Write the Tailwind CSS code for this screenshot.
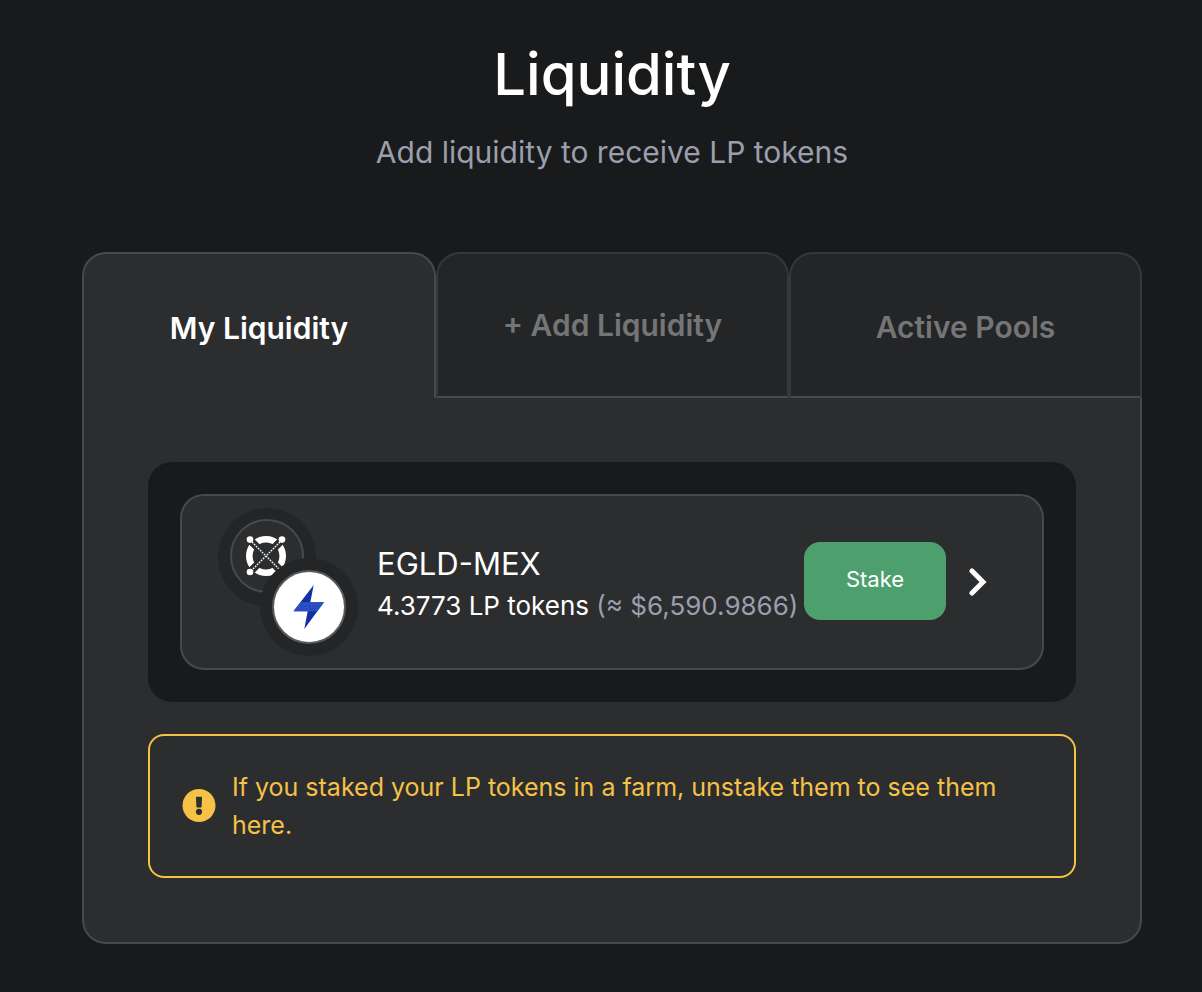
<!DOCTYPE html>
<html lang="en">
<head>
<meta charset="utf-8">
<meta name="viewport" content="width=device-width, initial-scale=1">
<title>Liquidity</title>
<script src="https://cdn.jsdelivr.net/npm/@tailwindcss/browser@4"></script>
</head>
<body class="min-h-screen bg-[#191a1c] font-['Inter',sans-serif] text-white">
<main class="pt-9 pb-12 pl-[82px] pr-[60px]">
  <header class="flex flex-col items-center text-center">
    <h1 class="text-[58px] leading-[76px] font-medium">Liquidity</h1>
    <p class="mt-4 text-[30px] leading-[48px] text-[#9a9fae]">Add liquidity to receive LP tokens</p>
  </header>

  <div role="tablist" class="mt-[76px] grid grid-cols-[354px_1fr_1fr] text-[30px] leading-[48px] font-semibold">
    <button type="button" role="tab" aria-selected="true" class="h-[146px] rounded-t-3xl border-2 border-b-0 border-[#48494b] bg-[#2c2d2f] pt-1">My Liquidity</button>
    <button type="button" role="tab" aria-selected="false" class="h-[146px] rounded-t-3xl border-2 border-[#363739] border-b-[#48494b] bg-[#242527] text-[#747577]">+ Add Liquidity</button>
    <button type="button" role="tab" aria-selected="false" class="h-[146px] rounded-t-3xl border-2 border-[#363739] border-b-[#48494b] bg-[#242527] pt-1 text-[#747577]">Active Pools</button>
  </div>

  <section role="tabpanel" class="flex flex-col gap-8 rounded-b-3xl border-2 border-t-0 border-[#48494b] bg-[#2c2d2f] p-16">
    <div class="rounded-3xl bg-[#191a1c] p-8">
      <article class="flex h-44 items-center rounded-3xl border-2 border-[#48494b] bg-[#2c2d2f] pl-9 pr-[55px]">
        <svg class="h-[150px] w-[140px] shrink-0" viewBox="0 0 140 150" aria-hidden="true">
          <circle cx="49" cy="50" r="49" fill="#242527"/>
          <circle cx="49" cy="49" r="36" fill="#2c2d2f" stroke="#48494b" stroke-width="2"/>
          <circle cx="48" cy="49" r="16.7" fill="none" stroke="#fff" stroke-width="6.6"/>
          <path d="M32 33 64 65M64 33 32 65" stroke="#2c2d2f" stroke-width="7.6"/>
          <path d="M32 33 64 65M64 33 32 65" stroke="#fff" stroke-width="1.3" stroke-dasharray="1.8 1"/>
          <g fill="#fff"><circle cx="32" cy="32.6" r="3.3"/><circle cx="64" cy="32.6" r="3.3"/><circle cx="32" cy="65" r="3.3"/><circle cx="64" cy="65" r="3.3"/></g>
          <circle cx="91" cy="100" r="49" fill="#242527"/>
          <circle cx="91" cy="100" r="36" fill="#fff" stroke="#58595b" stroke-width="2"/>
          <path d="M95.7 78 92.3 95.3H106L86.3 122 89.7 104.3H75.5Z" fill="#122fa6"/>
          <path d="M82.5 95.3H106L99.3 104.3H75.5Z" fill="#2c50c4"/>
          <path d="M83 99h18M80 102h20M90 106h8M90 109h6" stroke="#122fa6" stroke-width="1" stroke-dasharray="1 3"/>
        </svg>
        <div class="ml-[19px] pt-1 whitespace-nowrap">
          <h2 class="text-[31px] leading-[44px]">EGLD-MEX</h2>
          <p class="text-[26px] leading-[40px]">4.3773 LP tokens <span class="text-[#9a9fae]">(≈ $6,590.9866)</span></p>
        </div>
        <button type="button" class="mb-0.5 ml-auto h-[78px] w-[142px] shrink-0 rounded-2xl bg-[#4d9f6e] pb-1 text-[22px]">Stake</button>
        <button type="button" aria-label="Open EGLD-MEX position" class="ml-[23px] shrink-0">
          <svg class="h-7 w-[18px]" viewBox="0 0 18 28" fill="none" stroke="#fff" stroke-width="5" stroke-linecap="round" stroke-linejoin="miter" aria-hidden="true"><path d="M3 3 14 14 3 25"/></svg>
        </button>
      </article>
    </div>

    <div role="status" class="flex items-center gap-4 rounded-2xl border-2 border-[#f5c146] px-8 py-8 text-[25px] leading-[38px] text-[#f5c146]">
      <svg class="h-[34px] w-[34px] shrink-0" viewBox="0 0 34 34" aria-hidden="true"><circle cx="17" cy="16.5" r="16.5" fill="#f5c146"/><path d="M14 8.2Q14 7.7 14.5 7.7H19.5Q20 7.7 20 8.2L19.6 17.8Q19.5 18.5 18.8 18.5H15.2Q14.5 18.5 14.4 17.8Z" fill="#2c2d2f"/><circle cx="17" cy="22.8" r="3.1" fill="#2c2d2f"/></svg>
      <p>If you staked your LP tokens in a farm, unstake them to see them here.</p>
    </div>
  </section>
</main>
</body>
</html>
